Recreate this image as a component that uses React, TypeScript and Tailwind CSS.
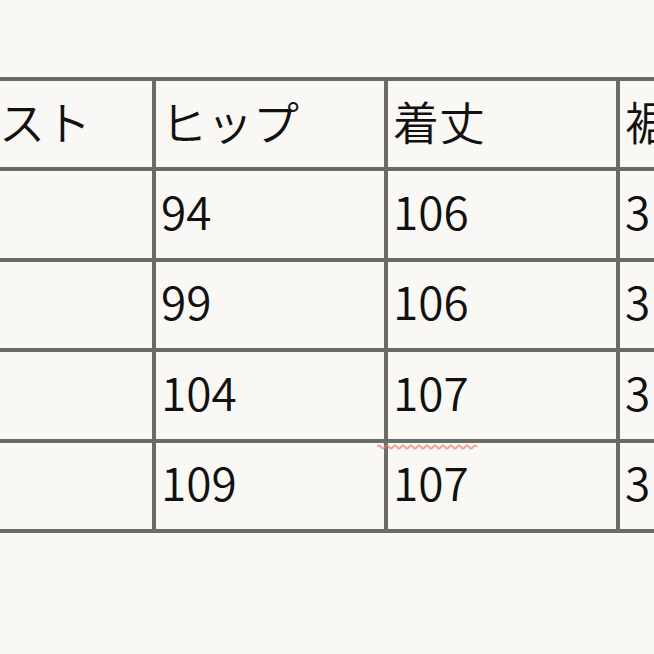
const header = ['バスト', 'ヒップ', '着丈', '裾幅'];
const rows = [
  ['', '94', '106', '3'],
  ['', '99', '106', '3'],
  ['', '104', '107', '3'],
  ['', '109', '107', '3'],
];

const Cell = ({ text }: { text: string }) => (
  <div className="flex h-[86.4px] items-center bg-[#f9f8f4] pl-[5px] pb-[8px] whitespace-nowrap overflow-hidden">
    {text}
  </div>
);

export default function App() {
  return (
    <div
      className="relative h-[654px] w-[654px] overflow-hidden bg-[#f9f8f4] text-[46px] font-[350] text-[#111]"
      style={{ fontFamily: '"Noto Sans CJK JP", "Noto Sans", sans-serif' }}
    >
      <div className="pt-[77px] ml-[-56px]">
        <div className="grid w-max grid-cols-[204px_228px_228px_228px] gap-[4px] border-4 border-[#6b6b68] bg-[#6b6b68]">
          {header.map((h) => (
            <Cell key={h} text={h} />
          ))}
          {rows.map((r, i) => r.map((c, j) => <Cell key={`${i}-${j}`} text={c} />))}
        </div>
      </div>
      {/* spell-check squiggle */}
      <svg className="absolute left-[377px] top-[443px]" width="102" height="8" viewBox="0 0 102 8">
        <path
          d="M0 4 q2 -3 4 0 t4 0 t4 0 t4 0 t4 0 t4 0 t4 0 t4 0 t4 0 t4 0 t4 0 t4 0 t4 0 t4 0 t4 0 t4 0 t4 0 t4 0 t4 0 t4 0 t4 0 t4 0 t4 0 t4 0 t4 0"
          fill="none"
          stroke="#ee7a74"
          strokeWidth="2"
          opacity="0.7"
        />
      </svg>
    </div>
  );
}
